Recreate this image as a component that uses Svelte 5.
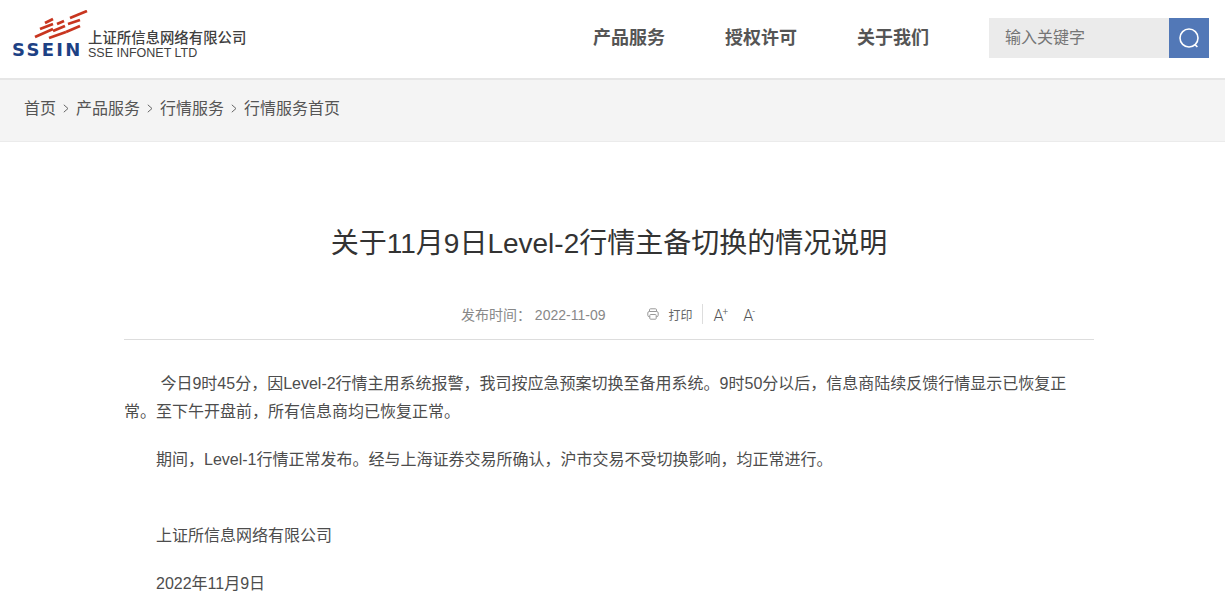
<script>
  let keyword = $state('');

  const nav = ['产品服务', '授权许可', '关于我们'];
  const crumbs = ['首页', '产品服务', '行情服务', '行情服务首页'];

  // logo stripes, in svg coordinates
  const stripes = [
    [12, 13, 20, 9],
    [7, 19, 20, 14],
    [2, 27, 20, 19],
    [24, 14, 31, 11],
    [20, 21, 32, 16],
    [16, 28, 33, 22],
    [37, 8, 54, 1],
    [35, 14, 47, 10],
    [33, 22, 47, 16]
  ];
</script>

<header class="top">
  <a class="logo" href="#home">
    <div class="logo-mark">
      <svg class="stripes" width="56" height="30" viewBox="0 0 56 30" stroke="#c8351f" stroke-width="2.7">
        {#each stripes as s}
          <line x1={s[0]} y1={s[1]} x2={s[2]} y2={s[3]} />
        {/each}
      </svg>
      <span class="ssein">SSEIN</span>
    </div>
    <div class="logo-text">
      <span class="cn">上证所信息网络有限公司</span>
      <span class="en">SSE INFONET LTD</span>
    </div>
  </a>

  <nav class="nav">
    {#each nav as item}
      <a href="#nav">{item}</a>
    {/each}
  </nav>

  <form class="search">
    <input type="text" placeholder="输入关键字" bind:value={keyword} />
    <button type="button" aria-label="搜索">
      <svg width="22" height="22" viewBox="0 0 22 22" fill="none" stroke="#fff" stroke-width="1.6">
        <circle cx="11" cy="11" r="9" />
        <path d="M17 17.6 L19.4 20" />
      </svg>
    </button>
  </form>
</header>

<div class="crumbs">
  {#each crumbs as c, i}
    {#if i > 0}
      <svg class="sep" width="6" height="9" viewBox="0 0 6 9" fill="none" stroke="#666" stroke-width="1">
        <path d="M0.8 0.8 L5 4.5 L0.8 8.2" />
      </svg>
    {/if}
    <a href="#crumb">{c}</a>
  {/each}
</div>

<main class="article">
  <h1>关于11月9日Level-2行情主备切换的情况说明</h1>

  <div class="meta">
    <span class="date">发布时间：&nbsp;2022-11-09</span>
    <span class="print">
      <svg width="12" height="12" viewBox="0 0 12 12" fill="none" stroke="#999" stroke-width="1">
        <rect x="2.5" y="0.8" width="7" height="4" rx="1" />
        <rect x="0.8" y="3.5" width="10.4" height="5.2" rx="1.5" fill="#fff" />
        <rect x="2.8" y="6.5" width="6.4" height="4.7" rx="0.8" fill="#fff" />
      </svg>
      打印
    </span>
    <span class="font-size">
      <span class="a">A<sup>+</sup></span>
      <span class="a">A<sup>-</sup></span>
    </span>
  </div>

  <div class="content">
    <p class="indent">&nbsp;今日9时45分，因Level-2行情主用系统报警，我司按应急预案切换至备用系统。9时50分以后，信息商陆续反馈行情显示已恢复正常。至下午开盘前，所有信息商均已恢复正常。</p>
    <p class="indent">期间，Level-1行情正常发布。经与上海证券交易所确认，沪市交易不受切换影响，均正常进行。</p>
    <p class="indent blank"><br /></p>
    <p class="indent">上证所信息网络有限公司</p>
    <p class="indent">2022年11月9日</p>
  </div>
</main>

<style>
  :global(body) {
    margin: 0;
    background: #fff;
    color: #333;
    font-family: "Liberation Sans", "Noto Sans CJK SC", sans-serif;
  }

  a {
    color: inherit;
    text-decoration: none;
  }

  .top {
    height: 78px;
    display: flex;
    align-items: center;
    padding: 0 16px 0 12px;
    border-bottom: 2px solid #e6e6e6;
  }

  .logo {
    display: flex;
    align-items: flex-end;
    gap: 8px;
    height: 50px;
    margin-top: -9px;
  }

  .logo-mark {
    display: flex;
    flex-direction: column;
    width: 68px;
  }

  .stripes {
    display: block;
    margin-left: 21px;
  }

  .ssein {
    font-family: "DejaVu Sans", sans-serif;
    font-size: 18px;
    line-height: 20px;
    font-weight: 700;
    letter-spacing: 2.3px;
    white-space: nowrap;
    color: #1d4184;
  }

  .logo-text {
    display: flex;
    flex-direction: column;
    color: #404040;
  }

  .cn {
    font-size: 14.4px;
    line-height: 16px;
    font-weight: 500;
    white-space: nowrap;
  }

  .en {
    font-size: 12.5px;
    line-height: 14px;
    white-space: nowrap;
  }

  .nav {
    margin-left: auto;
    margin-bottom: 6px;
    display: flex;
    gap: 60px;
    font-size: 18px;
    font-weight: 700;
    color: #555;
  }

  .search {
    display: flex;
    margin: -2px 0 0 60px;
    height: 40px;
  }

  .search input {
    width: 180px;
    box-sizing: border-box;
    border: none;
    outline: none;
    padding: 0 16px;
    background: #ebebeb;
    font: 16px "Liberation Sans", "Noto Sans CJK SC", sans-serif;
  }

  .search input::placeholder {
    color: #757575;
  }

  .search button {
    width: 40px;
    border: none;
    padding: 0;
    background: #5278b7;
    display: flex;
    align-items: center;
    justify-content: center;
  }

  .crumbs {
    height: 62px;
    box-sizing: border-box;
    padding: 0 0 8px 24px;
    display: flex;
    align-items: center;
    gap: 7px;
    background: #f4f4f4;
    border-bottom: 1px solid #ebebeb;
    font-size: 16px;
    color: #555;
  }

  .sep {
    margin-top: 3px;
  }

  .article {
    width: 970px;
    margin-left: 124px;
  }

  h1 {
    margin: 0;
    padding-top: 82px;
    text-align: center;
    font-size: 28px;
    line-height: 40px;
    font-weight: 400;
    color: #333;
  }

  .meta {
    margin-top: 32px;
    height: 36px;
    padding: 0 2px 7px 0;
    display: flex;
    align-items: center;
    justify-content: center;
    border-bottom: 1px solid #ddd;
    font-size: 14px;
    color: #888;
  }

  .print {
    display: flex;
    align-items: center;
    gap: 9px;
    margin-left: 42px;
    padding-right: 10px;
    height: 20px;
    font-size: 12px;
    color: #666;
    border-right: 1px solid #ddd;
  }

  .font-size {
    display: flex;
    gap: 15px;
    margin-left: 10px;
    padding-top: 4px;
  }

  .a {
    font-family: Roboto, sans-serif;
    font-weight: 300;
    font-size: 16px;
    color: #555;
    line-height: 20px;
  }

  .a sup {
    font-size: 10px;
    line-height: 0;
    margin-left: -1px;
  }

  .content {
    padding-top: 30px;
    font-size: 16px;
    line-height: 28px;
    color: #4d4d4d;
  }

  .content p {
    margin: 0 0 20px;
  }

  .content .blank {
    margin: 0;
  }

  .indent {
    text-indent: 32px;
  }
</style>
